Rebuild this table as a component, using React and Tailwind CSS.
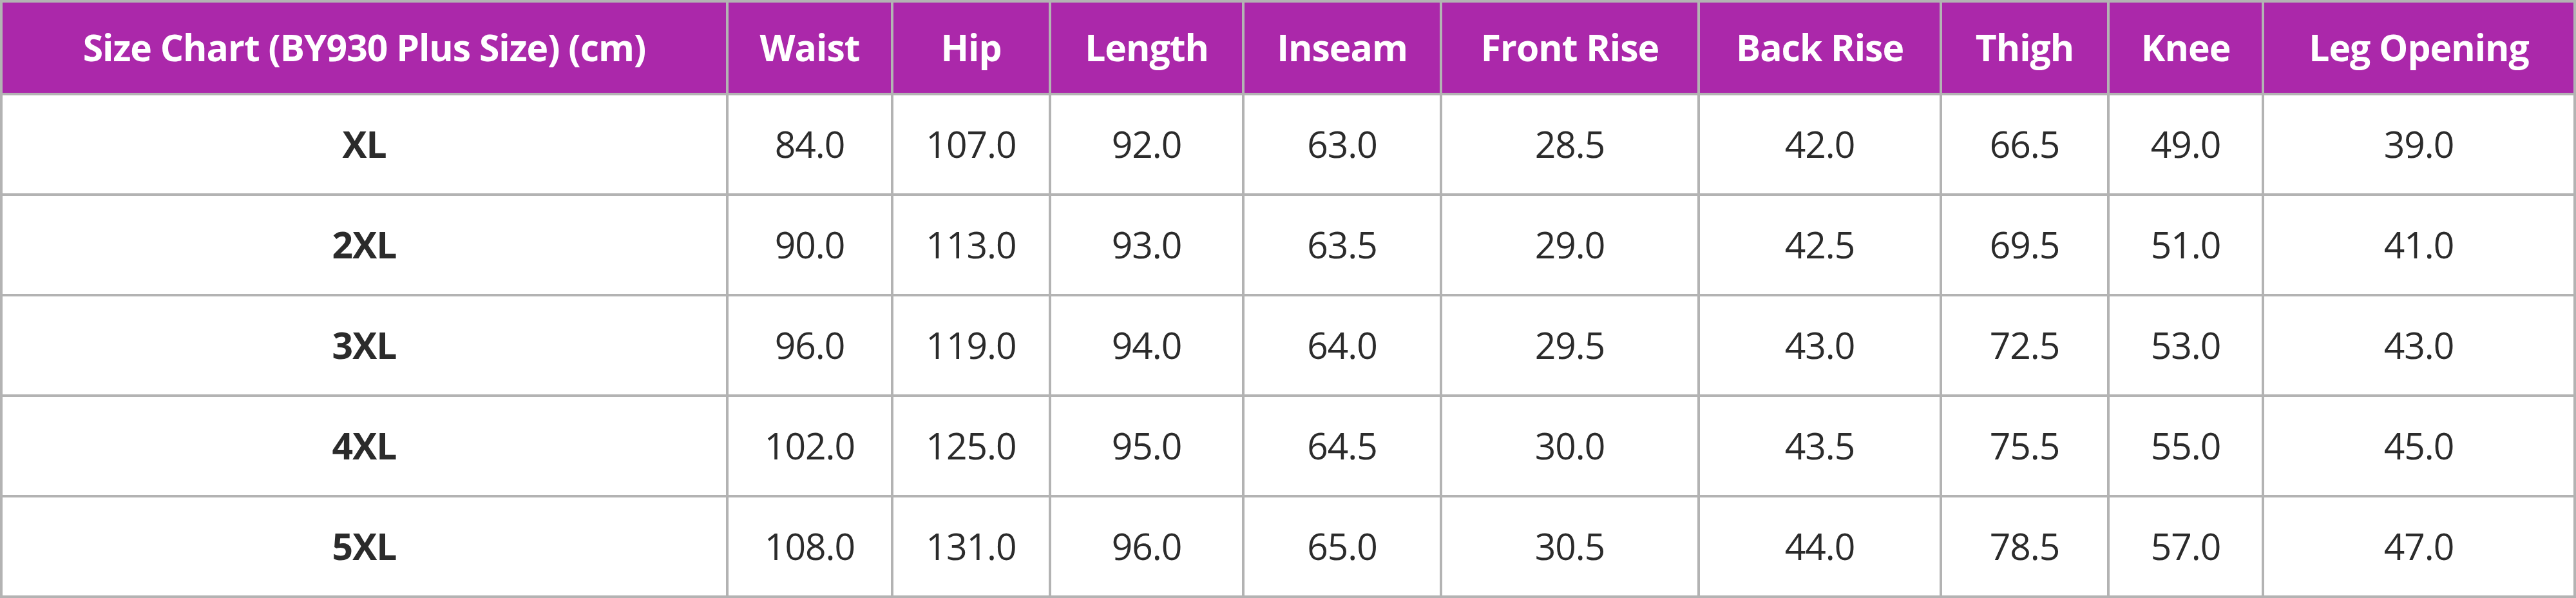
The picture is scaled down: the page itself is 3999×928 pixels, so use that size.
const headers = ['Size Chart (BY930 Plus Size) (cm)', 'Waist', 'Hip', 'Length', 'Inseam', 'Front Rise', 'Back Rise', 'Thigh', 'Knee', 'Leg Opening'];

const rows = [
  ['XL', '84.0', '107.0', '92.0', '63.0', '28.5', '42.0', '66.5', '49.0', '39.0'],
  ['2XL', '90.0', '113.0', '93.0', '63.5', '29.0', '42.5', '69.5', '51.0', '41.0'],
  ['3XL', '96.0', '119.0', '94.0', '64.0', '29.5', '43.0', '72.5', '53.0', '43.0'],
  ['4XL', '102.0', '125.0', '95.0', '64.5', '30.0', '43.5', '75.5', '55.0', '45.0'],
  ['5XL', '108.0', '131.0', '96.0', '65.0', '30.5', '44.0', '78.5', '57.0', '47.0'],
];

export default function App() {
  return (
    <div className="w-[3999px] h-[928px] bg-white font-['Open_Sans',sans-serif]">
      <div className="grid grid-cols-[1123px_252px_241px_296px_303px_396px_372px_256px_236px_480px] grid-rows-[140px_repeat(5,152px)] gap-[4px] p-[4px] bg-[#b3b3b3]">
        {headers.map((h) => (
          <div key={h} className="flex items-center justify-center bg-[#ab28aa] text-white font-bold text-[57px] tracking-[-1px] whitespace-nowrap">
            {h}
          </div>
        ))}
        {rows.map((r) =>
          r.map((c, i) => (
            <div
              key={r[0] + i}
              className={
                i === 0
                  ? 'flex items-center justify-center bg-white text-[#2b2b2b] font-bold text-[57px] tracking-[-1px]'
                  : 'flex items-center justify-center bg-white text-[#2b2b2b] text-[57px] tracking-[-1px]'
              }
            >
              {c}
            </div>
          ))
        )}
      </div>
    </div>
  );
}
